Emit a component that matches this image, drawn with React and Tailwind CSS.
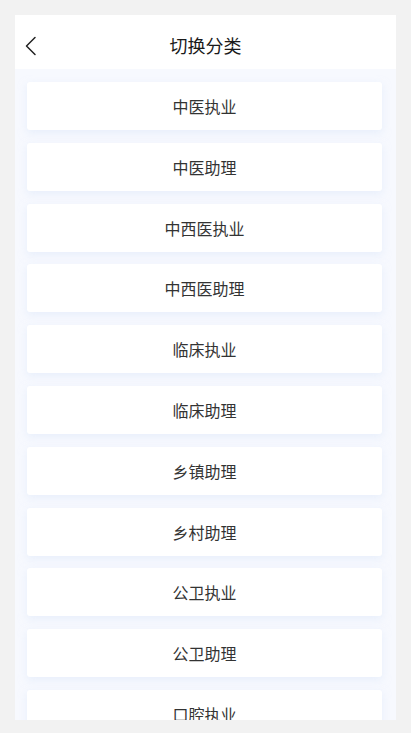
import React from "react";

const items = [
  "中医执业",
  "中医助理",
  "中西医执业",
  "中西医助理",
  "临床执业",
  "临床助理",
  "乡镇助理",
  "乡村助理",
  "公卫执业",
  "公卫助理",
  "口腔执业",
];

export default function App() {
  return (
    <div
      className="w-[411px] h-[733px] bg-[#f2f2f2] pt-[15px] px-[15px] overflow-hidden"
      style={{ fontFamily: '"Noto Sans CJK SC", "Noto Sans", sans-serif' }}
    >
      <div className="h-[705px] flex flex-col overflow-hidden bg-[#f7f9fe]">
        {/* Header */}
        <div className="h-[54px] shrink-0 bg-white relative flex items-center justify-center pt-[5px]">
          <button className="absolute left-[7px] top-[20px] w-[16px] h-[22px] flex items-center justify-center">
            <svg width="13" height="20" viewBox="0 0 13 20" fill="none">
              <path d="M11 1.5L2.5 10L11 18.5" stroke="#222" strokeWidth="1.5" strokeLinecap="round" strokeLinejoin="round" />
            </svg>
          </button>
          <h1 className="text-[18px] text-[#1a1a1a] leading-none">切换分类</h1>
        </div>

        {/* List */}
        <div className="flex flex-col gap-[12.8px] pl-[12px] pt-[13px]">
          {items.map((name) => (
            <div
              key={name}
              className="w-[355px] h-[48px] shrink-0 bg-white rounded-[3px] flex items-center justify-center text-[16px] text-[#333] shadow-[0_3px_8px_rgba(218,230,250,0.55)]"
            >
              {name}
            </div>
          ))}
        </div>
      </div>
    </div>
  );
}
